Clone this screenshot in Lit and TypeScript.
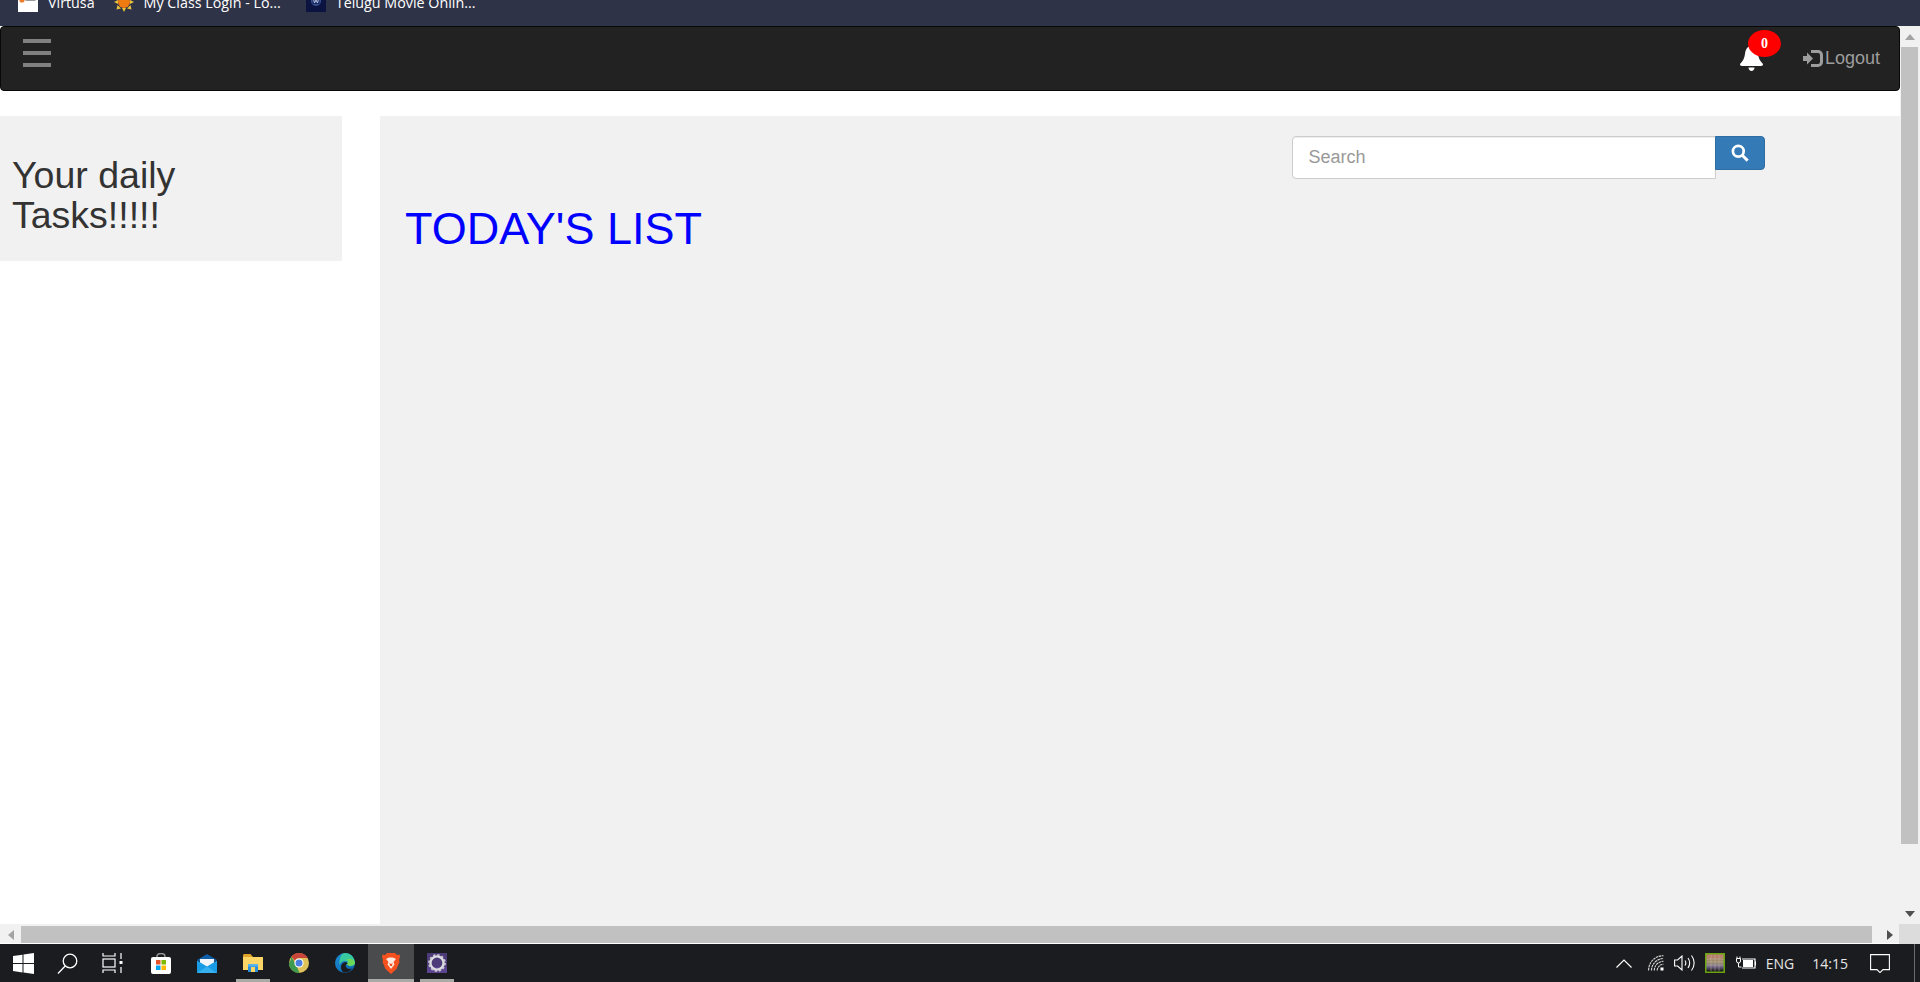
import { LitElement, html, css, svg } from 'lit';
import { customElement } from 'lit/decorators.js';

const bookmarks = [
  { label: 'Virtusa', icon: 'virtusa' },
  { label: 'My Class Login - Lo...', icon: 'sun' },
  { label: 'Telugu Movie Onlin...', icon: 'movie' },
];

const bookmarkIcons: Record<string, unknown> = {
  virtusa: svg`<rect width="20" height="20" fill="#fff"/><circle cx="4" cy="8" r="2.6" fill="#ee7d2b"/><rect x="7.5" y="7" width="10" height="2" fill="#999"/>`,
  sun: svg`<g fill="#e8c23a"><path d="M10 0l2 4h-4zM10 20l-2-4h4zM0 10l4-2v4zM20 10l-4 2v-4zM2.5 2.5l4.5 1-3.5 3.5zM17.5 17.5l-4.5-1 3.5-3.5zM2.5 17.5l1-4.5 3.5 3.5zM17.5 2.5l-1 4.5-3.5-3.5z"/></g><circle cx="10" cy="10" r="6" fill="#ee7a12"/>`,
  movie: svg`<rect width="20" height="20" fill="#0b1440"/><circle cx="10" cy="9" r="5" fill="#39508f"/><rect x="6.5" y="6" width="7" height="6" fill="#16245c"/><path d="M7.5 7l1 4 1.500-3 1.500 3 1-4" stroke="#b9c4e6" fill="none"/>`,
};

const winIcon = svg`<svg width="21" height="21" viewBox="0 0 21 21"><path fill="#fff" d="M0 3.1L9.5 1.7V10H0zM10.500 1.500L21 0V10H10.500zM0 11h9.500V19.400L0 18zM10.500 11H21V21L10.500 19.500z"/></svg>`;
const searchIcon = svg`<svg width="21" height="21" viewBox="0 0 21 21" fill="none" stroke="#fff" stroke-width="1.3"><circle cx="13" cy="8" r="6.8"/><path d="M8.2 13L1 20.5"/></svg>`;
const taskIcon = svg`<svg width="21" height="20" viewBox="0 0 21 20" fill="none" stroke="#fff" stroke-width="1.2"><path d="M1 0v3h12V0M1 20v-3h12v3"/><rect x="1" y="6" width="12" height="8"/><path d="M19 0v6M19 14v6"/><rect x="17.5" y="8" width="3" height="3" fill="#fff" stroke="none"/></svg>`;
const storeIcon = svg`<svg width="20" height="21" viewBox="0 0 20 21"><path d="M6 5V3.5C6 1.500 7.500.5 10 .5s4 1 4 3V5" fill="none" stroke="#9a9a9a" stroke-width="1.4"/><rect y="4" width="20" height="17" rx="2" fill="#fff"/><rect x="5" y="7" width="4.5" height="4.5" fill="#e8522a"/><rect x="10.5" y="7" width="4.5" height="4.5" fill="#7fba00"/><rect x="5" y="12.5" width="4.5" height="4.5" fill="#00a4ef"/><rect x="10.5" y="12.5" width="4.5" height="4.5" fill="#ffb900"/></svg>`;
const mailIcon = svg`<svg width="20" height="19" viewBox="0 0 20 19"><path d="M0 6L10 0l10 6-10 6z" fill="#0f5ea8"/><path d="M3 5h14v5l-7 3-7-3z" fill="#f2f6fa"/><path d="M0 6.5l10 6 10-6V19H0z" fill="#1a9be6"/><path d="M0 19l10-6.5L20 19z" fill="#36b1f0"/></svg>`;
const folderIcon = svg`<svg width="20" height="18" viewBox="0 0 20 18"><path d="M0 1.5C0 .6.500 0 1.500 0h6L10 3H0z" fill="#e0a42b"/><rect y="3" width="20" height="13" fill="#fbd565"/><rect x="5" y="10" width="10" height="8" fill="#2a8ed8"/><rect x="8" y="13" width="4" height="5" fill="#fbd565"/><rect x="5" y="10" width="10" height="2.5" fill="#55b4ee"/></svg>`;
const chromeIcon = svg`<svg width="20" height="20" viewBox="0 0 20 20"><circle cx="10" cy="10" r="10" fill="#e0c25a"/><path d="M10 0a10 10 0 018.7 5H10a5 5 0 00-4.3 2.5L2.3 3.6A10 10 0 0110 0z" fill="#c9453a"/><path d="M0 10a10 10 0 002.3-6.4L7 11.5 10.5 20A10 10 0 010 10z" fill="#3d9a4f"/><circle cx="10" cy="10" r="4.6" fill="#fff"/><circle cx="10" cy="10" r="3.5" fill="#4a7fe0"/></svg>`;
const edgeIcon = svg`<svg width="20" height="20" viewBox="0 0 20 20"><defs><linearGradient id="eg" x1="0" y1="0" x2="1" y2="1"><stop offset="0" stop-color="#1b8fd8"/><stop offset="1" stop-color="#0b5fa8"/></linearGradient></defs><circle cx="10" cy="10" r="10" fill="url(#eg)"/><path d="M10 0a10 10 0 019.9 11c-1 2-5 3-6.5 1.5 1-2-.5-4.5-3.4-4.5-3 0-5 2-5.500 4C4 6 6 0 10 0z" fill="#38c9a0"/><path d="M19.9 9.5c.3 2.500-3.500 4-6.500 3-1.500-.5-2-1.500-1.700-2.500 2-1 2-3-.7-3.500 4-1.500 8.500-.5 8.900 3z" fill="#6bd85a"/><path d="M6 14c0-4 5-6.5 7-3.500-1.500 0-3 1.200-2 3.500 1 2 4 2.500 6 1.500-2 3-5 4.500-8 4C7 19 6 16.500 6 14z" fill="#1b1c1f"/></svg>`;
const braveIcon = svg`<svg width="18" height="21" viewBox="0 0 18 21"><path d="M5 0h8l2 2 2.500-.5L18 4l-1 3 .5 2-3 7-5.500 5-5.500-5-3-7L1 7 0 4l.5-2.500L3 2z" fill="#f4511e"/><path d="M4 6l3-1.500h4L14 6l-2.500 3 1 2.500L9 16l-3.500-4.500 1-2.500z" fill="#ffe9e0"/><path d="M7.5 10l1.500 1 1.500-1-.5 3H8z" fill="#f4511e"/></svg>`;
const settingsIcon = svg`<svg width="20" height="20" viewBox="0 0 20 20"><rect width="20" height="20" fill="#4d3a78"/><path d="M0 14h20v6H0z" fill="#5c4590"/><circle cx="10" cy="10" r="6.6" fill="none" stroke="#dcdce0" stroke-width="2.4"/><circle cx="10" cy="10" r="8" fill="none" stroke="#c9c9d2" stroke-width="1.8" stroke-dasharray="2.2 2"/></svg>`;

const chevronTray = svg`<svg width="16" height="9" viewBox="0 0 16 9" fill="none" stroke="#fff" stroke-width="1.2"><path d="M.5 8.5L8 1l7.500 7.500"/></svg>`;
const wifiTray = svg`<svg width="16" height="16" viewBox="0 0 16 16" fill="none" stroke="#d8d8d8" stroke-width="1.1"><path d="M.6 15.5C.6 7 7 .7 15.5.7M3.5 15.5C3.5 9 9 3.5 15.5 3.5M6.3 15.5c0-5 4-9.200 9.200-9.200M9.2 15.5c0-3 3-6.300 6.300-6.300" stroke-dasharray="2.5 .6"/><rect x="12.5" y="12.5" width="3" height="3" fill="#fff" stroke="none"/></svg>`;
const speakerTray = svg`<svg width="21" height="16" viewBox="0 0 21 16" fill="none" stroke="#fff" stroke-width="1.1"><path d="M.6 5h3L8 1v14L3.6 11H.6zM11 5.500c1 1.500 1 3.500 0 5M14 3c2 3 2 7 0 10M17.500.5c3.500 4.500 3.500 10.500 0 15"/></svg>`;
const paletteTray = svg`<svg width="20" height="20" viewBox="0 0 20 20"><defs><linearGradient id="pal" x1="0" y1="0" x2="0" y2="1"><stop offset="0" stop-color="#c07a70"/><stop offset=".45" stop-color="#9a8c6a"/><stop offset=".7" stop-color="#7a6a90"/><stop offset="1" stop-color="#101010"/></linearGradient></defs><rect width="20" height="20" fill="#6aa510"/><rect x="1.5" y="1.5" width="17" height="17" fill="url(#pal)"/><path d="M1.5 6h17M1.5 9h17M1.5 12h17M6 1.500v17M10 1.500v17M14 1.500v17" stroke="#c9c3aa" stroke-width=".6" opacity=".7"/></svg>`;
const batteryTray = svg`<svg width="20" height="14" viewBox="0 0 20 14"><path d="M6 3h13v9H6" fill="none" stroke="#fff" stroke-width="1.2"/><rect x="7" y="4" width="10" height="7" fill="#fff"/><rect x="19" y="5.5" width="1" height="4" fill="#fff"/><path d="M1 .5v2M4 .5v2M.5 2.500h4v2.500a2 2 0 01-4 0zM2.500 7v4h3" fill="none" stroke="#fff" stroke-width="1"/></svg>`;
const noteTray = svg`<svg width="20" height="19" viewBox="0 0 20 19" fill="none" stroke="#fff" stroke-width="1.1"><path d="M.6.6h18.800v15H13l-3 3-3-3H.6z"/></svg>`;

@customElement('app-root')
export class AppRoot extends LitElement {
  static styles = css`
    :host {
      display: flex;
      flex-direction: column;
      width: 1920px;
      height: 982px;
      overflow: hidden;
      background: #fff;
      font-family: 'Liberation Sans', Arial, sans-serif;
    }

    /* browser chrome */
    .bookmarks {
      height: 26px;
      flex: none;
      display: flex;
      align-items: flex-end;
      padding: 0 0 14px 18px;
      box-sizing: border-box;
      background: #2f3347;
      overflow: hidden;
    }
    .bookmark {
      display: flex;
      align-items: center;
      gap: 10px;
      margin-right: 25px;
      color: #fff;
      font: 14.3px 'Open Sans', sans-serif;
      white-space: nowrap;
    }
    .bookmark:first-child { margin-right: 19px; }
    .bookmark svg { flex: none; }

    .viewport { flex: 1; display: flex; min-height: 0; }
    .page-col { flex: 1; display: flex; flex-direction: column; min-width: 0; }
    .page { flex: 1; min-height: 0; display: flex; flex-direction: column; background: #fff; }

    /* navbar */
    .navbar {
      height: 65px;
      flex: none;
      box-sizing: border-box;
      margin-bottom: 25px;
      padding: 0 19px 0 22px;
      display: flex;
      justify-content: space-between;
      background: #222;
      border: 1px solid #080808;
      border-radius: 4px;
    }
    .burger { display: flex; flex-direction: column; gap: 8.5px; padding-top: 12px; }
    .burger span { width: 28px; height: 3.5px; background: #808080; }
    .nav-right { display: flex; align-items: flex-start; }
    .bell { position: relative; width: 23px; height: 25px; margin-top: 19px; margin-right: 40px; }
    .badge {
      position: absolute;
      top: -16px;
      left: 8px;
      width: 33px;
      height: 27px;
      border-radius: 50%;
      background: #f00;
      color: #fff;
      font: bold 14px/27px 'Liberation Serif', serif;
      text-align: center;
    }
    .logout {
      display: flex;
      align-items: center;
      margin-top: 19px;
      color: #9d9d9d;
      font-size: 18px;
      line-height: 24px;
    }
    .logout svg { margin-right: 2px; }

    /* page body */
    .columns { flex: 1; display: flex; gap: 38px; min-height: 0; }
    .sidebar {
      width: 342px;
      height: 145px;
      flex: none;
      box-sizing: border-box;
      padding: 39px 100px 0 12px;
      background: #f1f1f1;
      color: #333;
      font-size: 37.5px;
      line-height: 40px;
    }
    .main { flex: 1; background: #f1f1f1; padding: 20px 135px 0 25px; }
    .search { display: flex; justify-content: flex-end; align-items: flex-start; }
    .search input {
      width: 424px;
      height: 43px;
      box-sizing: border-box;
      padding: 6px 15.5px;
      border: 1px solid #ccc;
      border-radius: 4px 0 0 4px;
      background: #fff;
      box-shadow: inset 0 1px 1px rgba(0, 0, 0, 0.075);
      font: 18px 'Liberation Sans', sans-serif;
      outline: none;
    }
    .search input::placeholder { color: #999; }
    .search button {
      width: 50px;
      height: 34px;
      margin-left: -1px;
      border: 1px solid #2e6da4;
      border-radius: 0 4px 4px 0;
      background: #337ab7;
      display: flex;
      align-items: center;
      justify-content: center;
      padding: 0;
    }
    .today { margin: 25px 0 0; color: #00f; font-size: 45px; font-weight: 400; line-height: 50px; }

    /* scrollbars */
    .vscroll {
      width: 20px;
      height: 898px;
      flex: none;
      background: #f1f1f1;
      display: flex;
      flex-direction: column;
      align-items: flex-start;
      padding-left: 1px;
      box-sizing: border-box;
    }
    .v-arrow { width: 17px; height: 21px; display: flex; align-items: center; justify-content: center; flex: none; }
    .v-thumb { width: 17px; height: 797px; flex: none; background: #c1c1c1; }
    .v-track { flex: 1; }
    .hscroll {
      height: 20px;
      flex: none;
      box-sizing: border-box;
      padding: 2px 0 1px;
      background: linear-gradient(#f1f1f1 19px, #fff 19px);
      display: flex;
    }
    .h-arrow { width: 21px; flex: none; display: flex; align-items: center; justify-content: center; }
    .h-thumb { width: 1851px; flex: none; background: #c1c1c1; }
    .h-track { flex: 1; display: flex; align-items: center; justify-content: flex-end; padding-right: 7px; }
    .corner { width: 21px; height: 20px; flex: none; margin-left: -1px; background: #dcdcdc; }

    /* taskbar */
    .taskbar {
      height: 38px;
      flex: none;
      display: flex;
      justify-content: space-between;
      background: #1b1c1f;
      color: #e6e6e6;
      font: 14px 'Open Sans', sans-serif;
    }
    .apps { display: flex; }
    .app { width: 46px; position: relative; display: flex; align-items: center; justify-content: center; }
    .app:nth-child(2) svg { margin-right: 4px; }
    .app:nth-child(3) svg { margin-right: 6px; }
    .app.active { background: #4a4b4d; }
    .app.running::after {
      content: '';
      position: absolute;
      left: 6px;
      right: 6px;
      bottom: 0;
      height: 3px;
      background: #a9a9a6;
    }
    .app.active.running::after { left: 0; right: 0; }
    .tray { display: flex; align-items: center; padding-right: 5px; }
    .tray > * { flex: none; }
    .tray svg { display: block; }
    .t-chevron { margin-right: 16px; }
    .t-wifi { margin-right: 10px; }
    .t-speaker { margin-right: 10px; }
    .t-palette { margin-right: 11px; }
    .t-battery { margin-right: 10px; }
    .t-lang { margin-right: 18px; }
    .t-time { margin-right: 22px; }
    .t-note { margin-right: 24px; }
    .t-peek { width: 1px; height: 100%; background: #6a6a6a; }
  `;

  render() {
    return html`
      <div class="bookmarks">
        ${bookmarks.map(b => html`
          <div class="bookmark">
            <svg width="20" height="20" viewBox="0 0 20 20">${bookmarkIcons[b.icon]}</svg>
            <span>${b.label}</span>
          </div>`)}
      </div>

      <div class="viewport">
        <div class="page-col">
          <div class="page">
            <nav class="navbar">
              <div class="burger"><span></span><span></span><span></span></div>
              <div class="nav-right">
                <div class="bell">
                  <svg width="23" height="25" viewBox="0 0 23 25">
                    <path fill="#fff" d="M11.5 0C7 0 5.5 4 5 8c-.5 4-2 7-5 10 0 1 .5 2 2 2h19c1.500 0 2-1 2-2-3-3-4.500-6-5-10-.5-4-2-8-6.500-8z"/>
                    <path fill="#fff" d="M8.5 21.5h6c0 2-1.500 3.500-3 3.500s-3-1.500-3-3.500z"/>
                  </svg>
                  <span class="badge">0</span>
                </div>
                <div class="logout">
                  <svg width="20" height="17" viewBox="0 0 20 17">
                    <path fill="#9d9d9d" d="M0 6h4V2.500L10 8.500l-6 6V11H0z"/>
                    <path fill="none" stroke="#9d9d9d" stroke-width="3" d="M8 1.500h7c2 0 3.500 1.500 3.500 3.500v7c0 2-1.500 3.500-3.500 3.500H8"/>
                  </svg>
                  <span>Logout</span>
                </div>
              </div>
            </nav>
            <div class="columns">
              <aside class="sidebar">Your daily Tasks!!!!!</aside>
              <section class="main">
                <div class="search">
                  <input placeholder="Search" />
                  <button aria-label="Search">
                    <svg width="18" height="18" viewBox="0 0 16 16" fill="none" stroke="#fff">
                      <circle cx="6.5" cy="6.5" r="4.8" stroke-width="2.4"/>
                      <path d="M10 10l4.8 4.8" stroke-width="2.6"/>
                    </svg>
                  </button>
                </div>
                <h1 class="today">TODAY'S LIST</h1>
              </section>
            </div>
          </div>
          <div class="hscroll">
            <div class="h-arrow">
              <svg width="6" height="10" viewBox="0 0 6 10"><path fill="#a3a3a3" d="M6 0v10L0 5z"/></svg>
            </div>
            <div class="h-thumb"></div>
            <div class="h-track">
              <svg width="6" height="10" viewBox="0 0 6 10"><path fill="#505050" d="M0 0v10l6-5z"/></svg>
            </div>
          </div>
        </div>
        <div class="vscroll-wrap">
          <div class="vscroll">
            <div class="v-arrow">
              <svg width="10" height="6" viewBox="0 0 10 6"><path fill="#a3a3a3" d="M0 6h10L5 0z"/></svg>
            </div>
            <div class="v-thumb"></div>
            <div class="v-track"></div>
            <div class="v-arrow">
              <svg width="10" height="6" viewBox="0 0 10 6"><path fill="#505050" d="M0 0h10L5 6z"/></svg>
            </div>
          </div>
          <div class="corner"></div>
        </div>
      </div>

      <footer class="taskbar">
        <div class="apps">
          <div class="app">${winIcon}</div>
          <div class="app">${searchIcon}</div>
          <div class="app">${taskIcon}</div>
          <div class="app">${storeIcon}</div>
          <div class="app">${mailIcon}</div>
          <div class="app running">${folderIcon}</div>
          <div class="app">${chromeIcon}</div>
          <div class="app">${edgeIcon}</div>
          <div class="app active running">${braveIcon}</div>
          <div class="app running">${settingsIcon}</div>
        </div>
        <div class="tray">
          <span class="t-chevron">${chevronTray}</span>
          <span class="t-wifi">${wifiTray}</span>
          <span class="t-speaker">${speakerTray}</span>
          <span class="t-palette">${paletteTray}</span>
          <span class="t-battery">${batteryTray}</span>
          <span class="t-lang">ENG</span>
          <span class="t-time">14:15</span>
          <span class="t-note">${noteTray}</span>
          <span class="t-peek"></span>
        </div>
      </footer>
    `;
  }
}
